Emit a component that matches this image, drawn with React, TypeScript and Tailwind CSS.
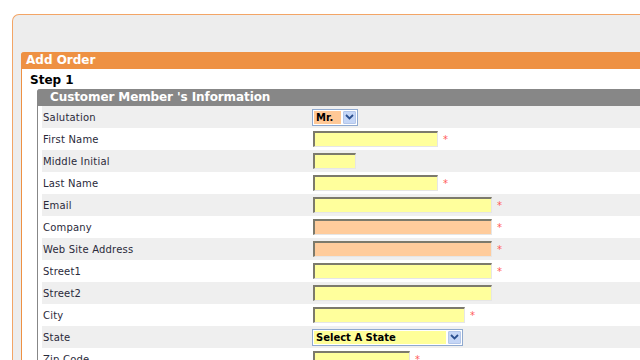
import React from 'react';

type Field = {
  label: string;
  kind: 'input' | 'select';
  width?: number;
  bg?: string;
  required?: boolean;
  value?: string;
};

const fields: Field[] = [
  { label: 'Salutation', kind: 'select', width: 46, value: 'Mr.', bg: 'peach' },
  { label: 'First Name', kind: 'input', width: 125, required: true },
  { label: 'Middle Initial', kind: 'input', width: 43 },
  { label: 'Last Name', kind: 'input', width: 125, required: true },
  { label: 'Email', kind: 'input', width: 179, required: true },
  { label: 'Company', kind: 'input', width: 179, bg: 'peach', required: true },
  { label: 'Web Site Address', kind: 'input', width: 179, bg: 'peach', required: true },
  { label: 'Street1', kind: 'input', width: 179, required: true },
  { label: 'Street2', kind: 'input', width: 179 },
  { label: 'City', kind: 'input', width: 152, required: true },
  { label: 'State', kind: 'select', width: 151, value: 'Select A State' },
  { label: 'Zip Code', kind: 'input', width: 97, required: true },
];

const Chevron = () => (
  <svg width="9" height="6" viewBox="0 0 9 6" fill="none">
    <path d="M1 1 L4.5 4.5 L8 1" stroke="#2b4f8e" strokeWidth="1.8" />
  </svg>
);

const SelectBox: React.FC<{ f: Field }> = ({ f }) => (
  <div
    className="flex items-center h-[17px] border border-[#8fa9cf] bg-white p-[1px] gap-[2px] ml-[-1px]"
    style={{ width: f.width }}
  >
    <div
      className={`flex-1 h-full flex items-center pl-[2px] text-[10px] font-bold text-black ${
        f.bg === 'peach' ? 'bg-[#ffc896]' : 'bg-[#ffff99]'
      }`}
    >
      {f.value}
    </div>
    <div className="w-[13px] h-full flex items-center justify-center bg-[#c5d6f6] border border-[#b3c6ea] rounded-[1px]">
      <Chevron />
    </div>
  </div>
);

const TextBox: React.FC<{ f: Field }> = ({ f }) => (
  <div
    className={`h-[16px] border-t-2 border-l-2 border-b border-r border-t-[#7c7a6c] border-l-[#7c7a6c] border-b-[#e6e6e6] border-r-[#e6e6e6] ${
      f.bg === 'peach' ? 'bg-[#ffcc9c]' : 'bg-[#ffff9c]'
    }`}
    style={{ width: f.width }}
  />
);

export default function App() {
  return (
    <div className="w-[640px] h-[360px] overflow-hidden bg-white font-['DejaVu_Sans',Verdana,sans-serif]">
      <div className="pt-[14px] pl-[12px]">
        <div className="border-t border-l border-[#f3a566] rounded-tl-[7px] bg-[#ededed] pt-[37px] pl-[8px]">
          <div className="border-l border-[#ee9143] rounded-tl-[4px] bg-white">
            <div className="h-[17px] bg-[#ee9143] rounded-tl-[3px] text-white text-[12px] font-bold leading-[17px] pl-[5px] ml-[-1px]">
              Add Order
            </div>
            <div className="pl-[8px] pt-[4px] h-[20px] text-[12px] font-bold text-black leading-[15px]">
              Step 1
            </div>
            <div className="ml-[15px] border-l border-[#878787] rounded-tl-[4px]">
              <div className="h-[17px] bg-[#878787] rounded-tl-[3px] text-white text-[12px] font-bold leading-[17px] pl-[13px] ml-[-1px] tracking-[-0.1px]">
                Customer Member 's Information
              </div>
              <div className="pl-[4px]">
                {fields.map((f, i) => (
                  <div
                    key={f.label}
                    className={`grid grid-cols-[270px_1fr] items-center h-[22px] pl-[1px] ${
                      i % 2 === 0 ? 'bg-[#efefef]' : 'bg-white'
                    }`}
                  >
                    <div className="text-[10px] text-[#2a2a3a] tracking-[0.2px]">{f.label}</div>
                    <div className="flex items-center gap-[5px]">
                      {f.kind === 'select' ? <SelectBox f={f} /> : <TextBox f={f} />}
                      {f.required && (
                        <span className="text-[10px] text-[#ff5a5a] leading-none mt-[2px]">*</span>
                      )}
                    </div>
                  </div>
                ))}
              </div>
            </div>
          </div>
        </div>
      </div>
    </div>
  );
}
